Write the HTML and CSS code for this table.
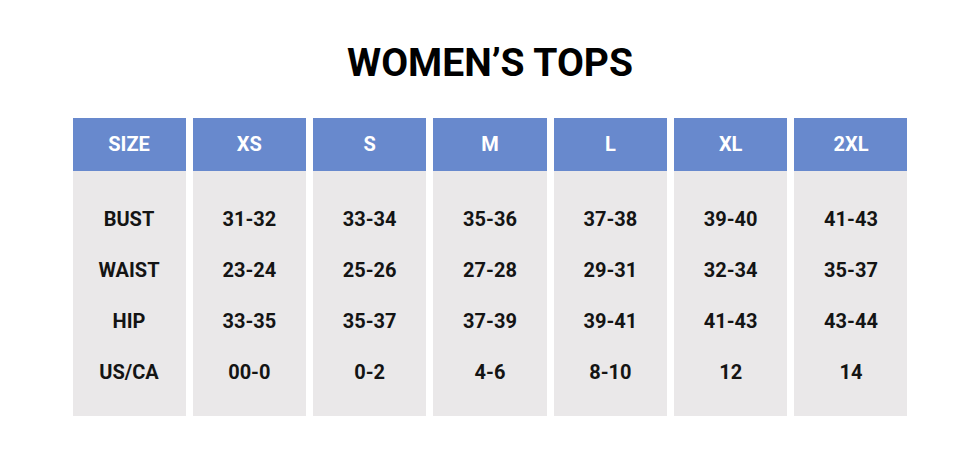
FILE: index.html
```html
<!DOCTYPE html>
<html lang="en">

<head>
    <meta charset="UTF-8" />
    <meta name="viewport" content="width=device-width, initial-scale=1.0" />
    <title>Women's Tops Size Chart</title>
    <link rel="stylesheet" href="styles.css">
</head>

<body>
    <div class="chart">
        <h1>WOMEN’S TOPS</h1>

        <div class="size-table">
            <div class="col">
                <div class="col-head">SIZE</div>
                <div class="col-body">
                    <div class="cell">BUST</div>
                    <div class="cell">WAIST</div>
                    <div class="cell">HIP</div>
                    <div class="cell">US/CA</div>
                </div>
            </div>
            <div class="col">
                <div class="col-head">XS</div>
                <div class="col-body">
                    <div class="cell">31-32</div>
                    <div class="cell">23-24</div>
                    <div class="cell">33-35</div>
                    <div class="cell">00-0</div>
                </div>
            </div>
            <div class="col">
                <div class="col-head">S</div>
                <div class="col-body">
                    <div class="cell">33-34</div>
                    <div class="cell">25-26</div>
                    <div class="cell">35-37</div>
                    <div class="cell">0-2</div>
                </div>
            </div>
            <div class="col">
                <div class="col-head">M</div>
                <div class="col-body">
                    <div class="cell">35-36</div>
                    <div class="cell">27-28</div>
                    <div class="cell">37-39</div>
                    <div class="cell">4-6</div>
                </div>
            </div>
            <div class="col">
                <div class="col-head">L</div>
                <div class="col-body">
                    <div class="cell">37-38</div>
                    <div class="cell">29-31</div>
                    <div class="cell">39-41</div>
                    <div class="cell">8-10</div>
                </div>
            </div>
            <div class="col">
                <div class="col-head">XL</div>
                <div class="col-body">
                    <div class="cell">39-40</div>
                    <div class="cell">32-34</div>
                    <div class="cell">41-43</div>
                    <div class="cell">12</div>
                </div>
            </div>
            <div class="col">
                <div class="col-head">2XL</div>
                <div class="col-body">
                    <div class="cell">41-43</div>
                    <div class="cell">35-37</div>
                    <div class="cell">43-44</div>
                    <div class="cell">14</div>
                </div>
            </div>
        </div>
    </div>
</body>

</html>
```

FILE: styles.css
```css
body {
    font-family: Roboto, "Liberation Sans", Arial, sans-serif;
    background: #fff;
    margin: 0;
    padding: 0;
    color: #111;
}

.chart {
    width: 835px;
    margin: 0 auto;
    padding-top: 41px;
}

h1 {
    margin: 0 0 32px;
    font-size: 39px;
    line-height: 45px;
    font-weight: 700;
    text-align: center;
    color: #000;
}

.size-table {
    display: grid;
    grid-template-columns: repeat(7, 1fr);
    column-gap: 7.33px;
}

.col-head {
    height: 53px;
    line-height: 53px;
    background: #6889cd;
    color: #fff;
    font-size: 20px;
    font-weight: 700;
    text-align: center;
}

.col-body {
    background: #eae8e9;
    padding: 22.5px 0 18.5px;
}

.cell {
    height: 51px;
    line-height: 51px;
    font-size: 20px;
    font-weight: 700;
    text-align: center;
    color: #141414;
}
```
